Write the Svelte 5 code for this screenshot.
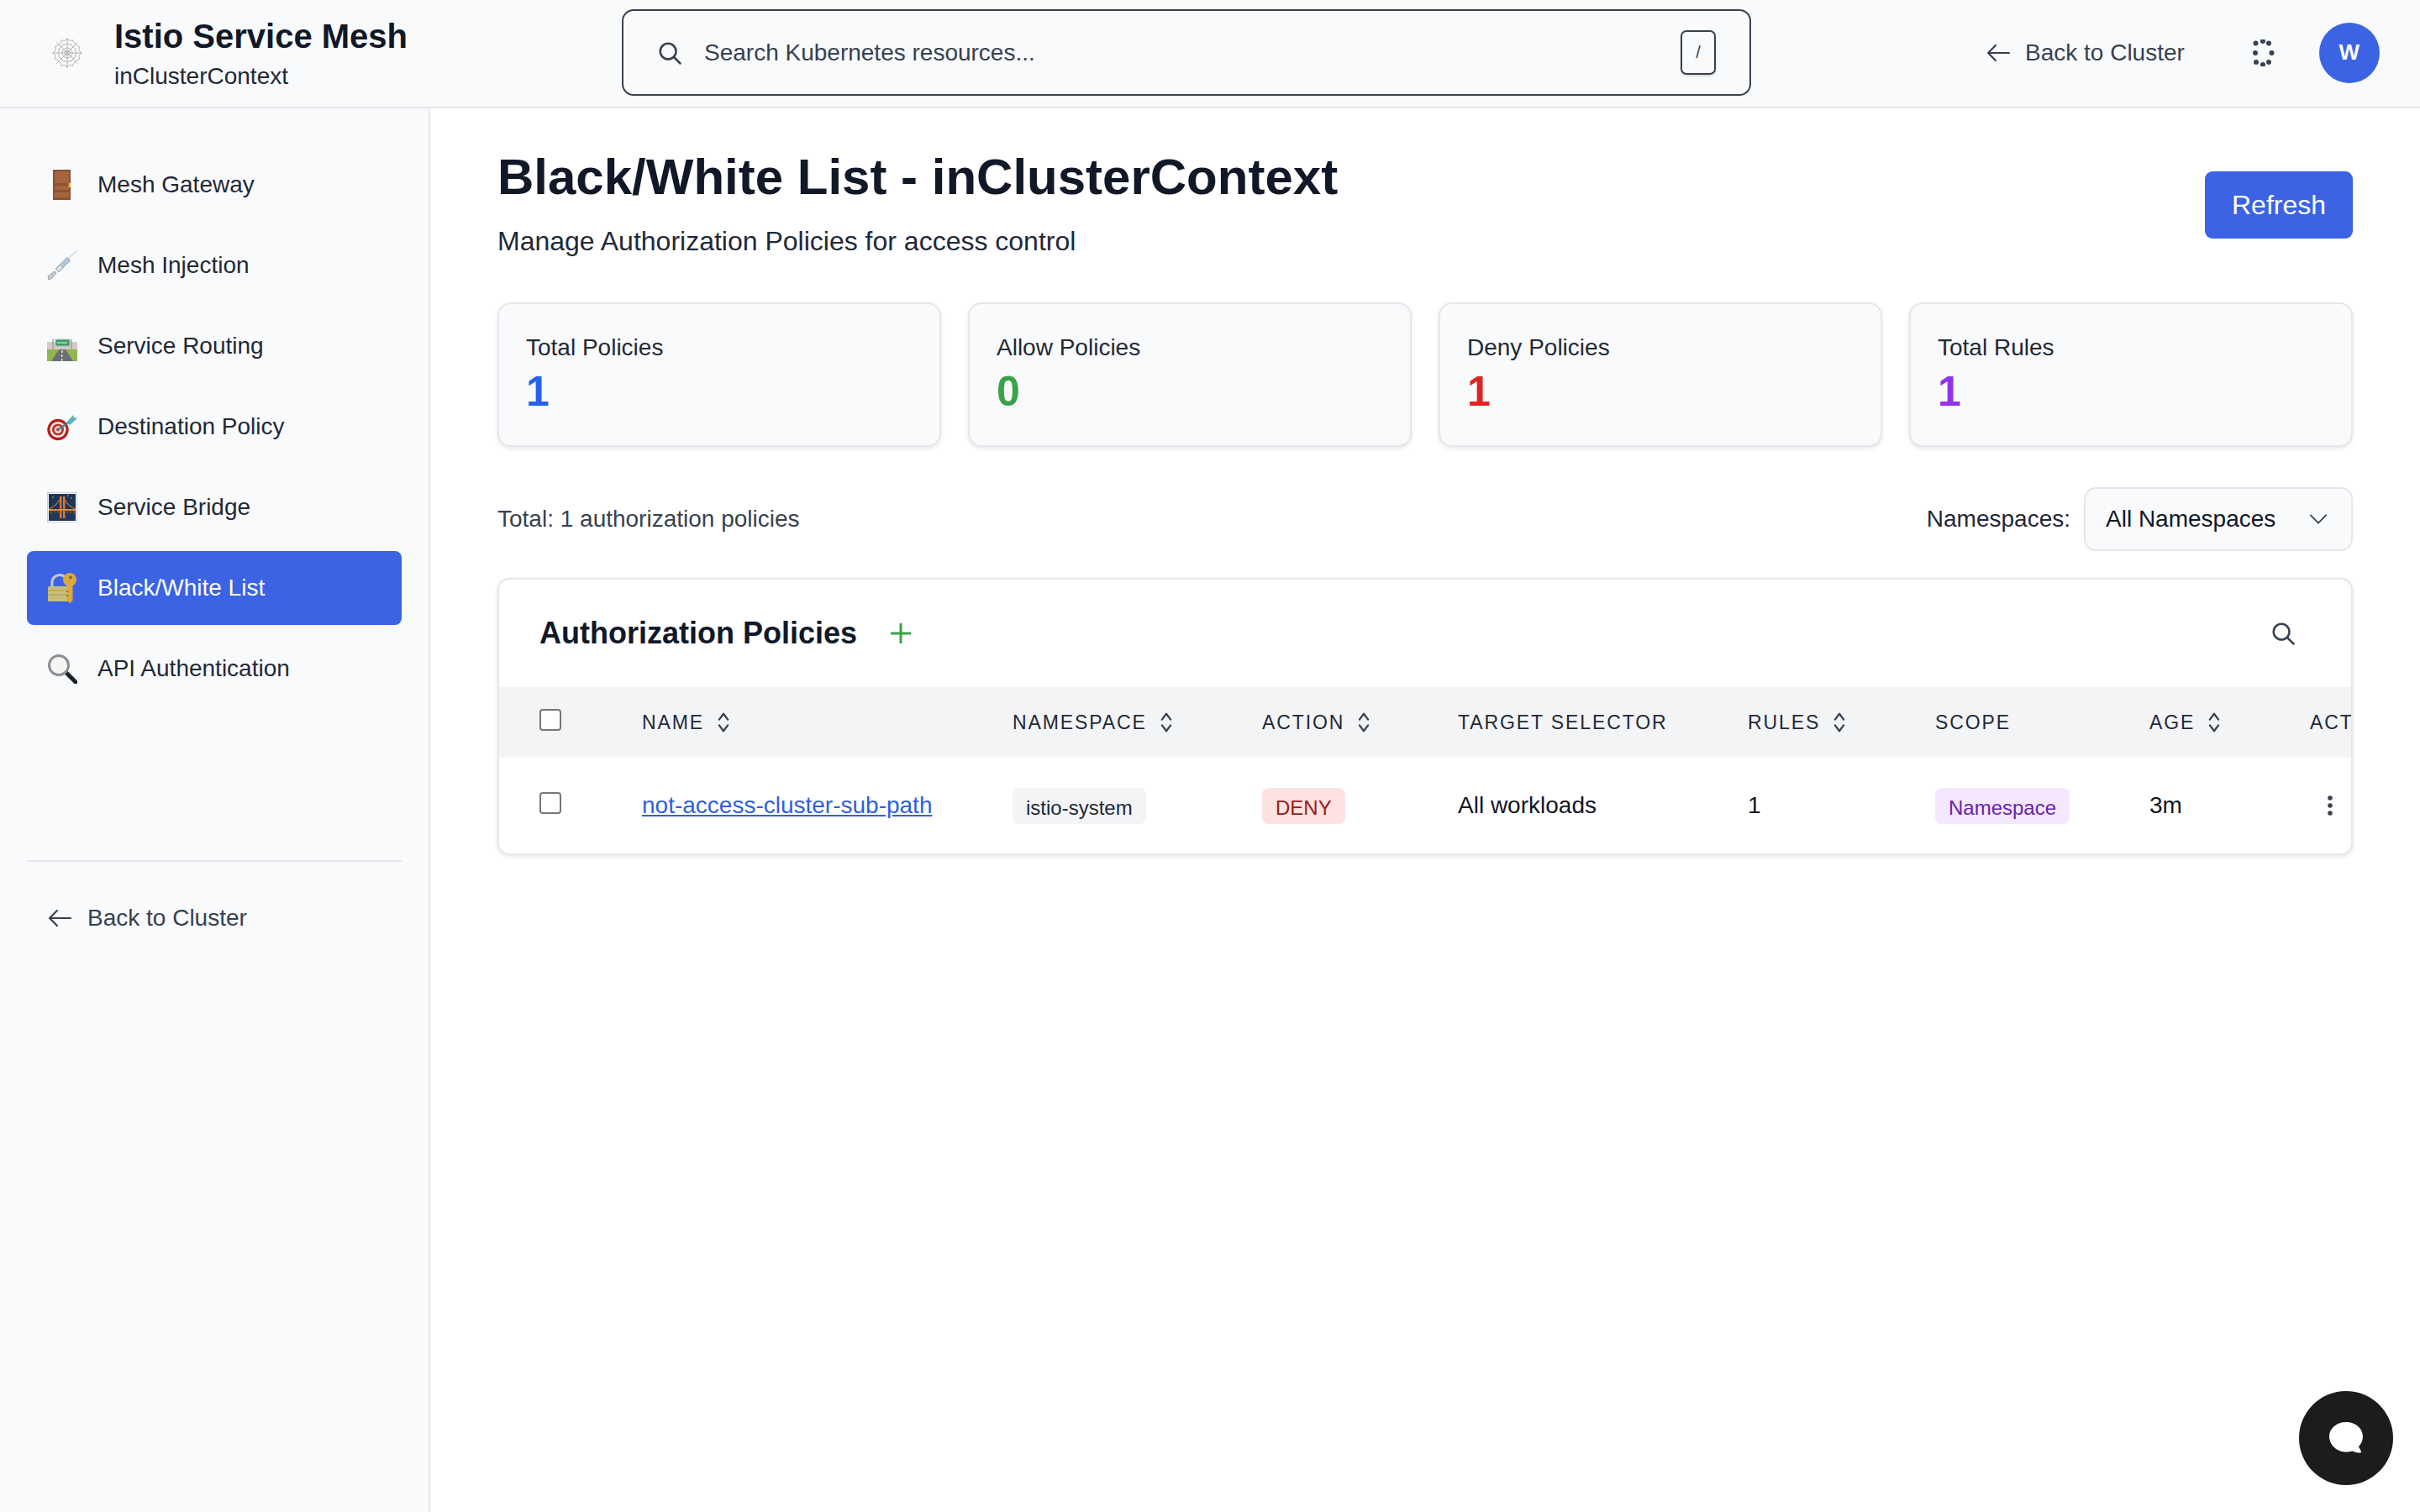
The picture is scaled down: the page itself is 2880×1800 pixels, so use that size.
<script>
	const navItems = [
		{ icon: 'door', label: 'Mesh Gateway' },
		{ icon: 'syringe', label: 'Mesh Injection' },
		{ icon: 'road', label: 'Service Routing' },
		{ icon: 'target', label: 'Destination Policy' },
		{ icon: 'bridge', label: 'Service Bridge' },
		{ icon: 'lock', label: 'Black/White List', active: true },
		{ icon: 'lens', label: 'API Authentication' }
	];

	const stats = [
		{ label: 'Total Policies', value: 1, tone: 'blue' },
		{ label: 'Allow Policies', value: 0, tone: 'green' },
		{ label: 'Deny Policies', value: 1, tone: 'red' },
		{ label: 'Total Rules', value: 1, tone: 'purple' }
	];

	const columns = [
		{ label: 'Name', sort: true },
		{ label: 'Namespace', sort: true },
		{ label: 'Action', sort: true },
		{ label: 'Target Selector' },
		{ label: 'Rules', sort: true },
		{ label: 'Scope' },
		{ label: 'Age', sort: true },
		{ label: 'Actions' }
	];

	const widths = [170, 441, 297, 233, 345, 223, 255, 191, 200];
	const dots = [
		[-8.5, -11.5], [0, -14], [7, -11.5], [-9, 0], [10.5, 0], [-8, 11], [0, 14], [7, 11]
	];
</script>

{#snippet searchIcon()}
	<svg class="ico-search" viewBox="0 0 24 24" fill="none" stroke="currentColor" stroke-width="2" stroke-linecap="round"><circle cx="10.5" cy="10.5" r="7.5" /><path d="m16 16 6 6" /></svg>
{/snippet}

{#snippet arrowLeft()}
	<svg class="ico-arrow" viewBox="0 0 30 24" fill="none" stroke="currentColor" stroke-width="2.2" stroke-linecap="round" stroke-linejoin="round"><path d="M28 12H3M12 3l-9 9 9 9" /></svg>
{/snippet}

{#snippet sortIcon()}
	<svg class="ico-sort" viewBox="0 0 14 24" fill="none" stroke="currentColor" stroke-width="2" stroke-linecap="round" stroke-linejoin="round"><path d="m2.500 9 4.500-6 4.500 6M2.500 15l4.500 6 4.500-6" /></svg>
{/snippet}

{#snippet emoji(name)}
	<svg class="emoji" viewBox="0 0 36 36">
		{#if name === 'door'}
			<rect x="7" y="0" width="21" height="36" fill="#8b5232" />
			<rect x="9" y="2" width="17" height="14" fill="#a5653f" />
			<rect x="9" y="19" width="17" height="5" fill="#a5653f" />
			<rect x="9" y="27" width="17" height="6" fill="#a5653f" />
			<rect x="25.500" y="16" width="2.500" height="5" fill="#e8b93a" />
		{:else if name === 'syringe'}
			<path d="M35 1 25 10" stroke="#b5bcc4" stroke-width="1" />
			<path d="M24 8.500 27.500 12 14 25.500 10.500 22Z" fill="#a9cde6" stroke="#8d98a3" />
			<path d="M19 20.500 15.500 17 10.500 22 14 25.500Z" fill="#e4eaef" stroke="#8d98a3" />
			<path d="M9 25 11 27 6 33 2 35 1 31Z" fill="#c6cbd0" stroke="#999" />
		{:else if name === 'road'}
			<rect x="0" y="13" width="36" height="9" fill="#d8c9c2" />
			<path d="M0 22h36v14H0Z" fill="#8fb84e" />
			<path d="M14 22h8l9 14H5Z" fill="#6d6f73" />
			<path d="M18 23v3M17.800 28v3M17.600 33v3" stroke="#fff" stroke-width="1.200" />
			<path d="M7 10v12M29 10v12" stroke="#9fa3a5" stroke-width="1.500" />
			<rect x="10" y="10" width="17" height="8" fill="#3b9e6a" stroke="#b8c2bc" />
			<path d="M12 14h12" stroke="#cfe8d6" stroke-width="1.200" />
		{:else if name === 'target'}
			<circle cx="13" cy="21.500" r="12.700" fill="#b3201e" />
			<circle cx="13" cy="21.500" r="9.500" fill="#f3ece6" />
			<circle cx="13" cy="21.500" r="7" fill="#c42e28" />
			<circle cx="13" cy="21.500" r="4.200" fill="#f3ece6" />
			<circle cx="13" cy="21.500" r="2" fill="#c42e28" />
			<path d="M13 21.500 27 12" stroke="#4f7f8f" stroke-width="2.200" />
			<path d="M23 13 31 4l1 3 4 1-9 8Z" fill="#58b5bf" />
		{:else if name === 'bridge'}
			<rect x="0.500" y="0.500" width="35" height="35" fill="#fff" stroke="#ccd" />
			<rect x="2" y="2" width="32" height="32" fill="#1d3557" />
			<rect x="2" y="26" width="32" height="8" fill="#20375f" />
			<path d="M2 20Q11 17 17 6M34 20Q25 17 19 6" fill="none" stroke="#d9752e" stroke-width="1.200" />
			<rect x="15" y="5" width="2.500" height="26" fill="#d9752e" />
			<rect x="19" y="5" width="2.500" height="26" fill="#d9752e" />
			<path d="M2 21h32" stroke="#e08a3c" stroke-width="2" />
			<path d="M5 22v4M9 21v4M13 21v4M24 21v4M28 21v4M32 22v4" stroke="#c9682a" stroke-width="1" />
			<circle cx="7" cy="6" r=".8" fill="#e7c66a" /><circle cx="29" cy="7" r=".8" fill="#e7c66a" /><circle cx="25" cy="4" r=".8" fill="#e7c66a" />
		{:else if name === 'lock'}
			<path d="M6 17v-6a9 9 0 0 1 16-5" fill="none" stroke="#c3c6cb" stroke-width="3" />
			<rect x="1" y="16" width="25" height="18" rx="1.500" fill="#c9bd7a" />
			<path d="M1 21h25M1 26h25" stroke="#a99c5c" stroke-width="1" />
			<circle cx="27" cy="8" r="8" fill="#dca93f" />
			<circle cx="28" cy="5.500" r="2" fill="#8a6c24" />
			<path d="M23.500 14h7v19l-3.500 3-3.500-3Z" fill="#dca93f" />
			<path d="M23 22h2.500M23 27h2.500" stroke="#8f6f25" stroke-width="1.500" />
		{:else}
			<path d="M22 22 34 34" stroke="#1e2226" stroke-width="5" stroke-linecap="round" />
			<circle cx="14" cy="14" r="11.500" fill="#f5f6f4" stroke="#8b9095" stroke-width="3" />
		{/if}
	</svg>
{/snippet}

<div class="app">
	<header class="topbar">
		<div class="brand">
			<svg class="web" viewBox="0 0 36 36" fill="none" stroke="#b4b4b4" stroke-width="1">
				<path d="M18 0v36M0 18h36M5.300 5.300l25.400 25.400M30.700 5.300 5.300 30.700" />
				<path d="M18 1Q21 5 24.500 2.500 25.500 8 33 11 30 14.500 35 18 30 21.500 33 25 25.500 28 24.500 33.500 21 31 18 35 15 31 11.500 33.500 10.500 28 3 25 6 21.500 1 18 6 14.500 3 11 10.500 8 11.500 2.500 15 5 18 1Z" />
				<path d="M18 7Q21 9 23 8 24 12 28 13 27 16 29 18 27 20 28 23 24 24 23 28 21 27 18 29 15 27 13 28 12 24 8 23 9 20 7 18 9 16 8 13 12 12 13 8 15 9 18 7Z" />
				<circle cx="18" cy="18" r="6" />
				<circle cx="18" cy="18" r="3" />
			</svg>
			<div class="brand-text">
				<div class="brand-title">Istio Service Mesh</div>
				<div class="brand-sub">inClusterContext</div>
			</div>
		</div>
		<div class="search">
			{@render searchIcon()}
			<span class="search-text">Search Kubernetes resources...</span>
			<kbd>/</kbd>
		</div>
		<div class="top-actions">
			<span class="top-back">{@render arrowLeft()}Back to Cluster</span>
			<svg class="spinner" viewBox="-16 -16 32 32" fill="#374151">
				{#each dots as [x, y]}
					<circle cx={x} cy={y} r="3" />
				{/each}
			</svg>
			<div class="avatar">W</div>
		</div>
	</header>

	<div class="body">
		<aside class="sidebar">
			<nav class="nav">
				{#each navItems as item}
					<div class="nav-item" class:active={item.active}>
						{@render emoji(item.icon)}
						<span>{item.label}</span>
					</div>
				{/each}
			</nav>
			<div class="side-foot">
				<span class="side-back">{@render arrowLeft()}Back to Cluster</span>
			</div>
		</aside>

		<main class="main">
			<div class="page-head">
				<div>
					<h1>Black/White List - inClusterContext</h1>
					<p>Manage Authorization Policies for access control</p>
				</div>
				<button class="refresh">Refresh</button>
			</div>

			<div class="stats">
				{#each stats as stat}
					<div class="stat">
						<div class="stat-label">{stat.label}</div>
						<div class="stat-value {stat.tone}">{stat.value}</div>
					</div>
				{/each}
			</div>

			<div class="filter-row">
				<span class="total">Total: 1 authorization policies</span>
				<div class="filter">
					<span>Namespaces:</span>
					<div class="select">
						<span>All Namespaces</span>
						<svg viewBox="0 0 24 24" fill="none" stroke="#374151" stroke-width="2" stroke-linecap="round" stroke-linejoin="round"><path d="m2 7 10 10 10-10" /></svg>
					</div>
				</div>
			</div>

			<section class="table-card">
				<div class="table-head">
					<div class="table-title">
						<h2>Authorization Policies</h2>
						<svg class="plus" viewBox="0 0 24 24" fill="none" stroke="#3ba24a" stroke-width="3" stroke-linecap="round"><path d="M12 1v22M1 12h22" /></svg>
					</div>
					{@render searchIcon()}
				</div>
				<table>
					<colgroup>
						{#each widths as w}
							<col style="width: {w}px" />
						{/each}
					</colgroup>
					<thead>
						<tr>
							<th class="check"><span class="box"></span></th>
							{#each columns as col}
								<th>
									<span class="th-inner">{col.label}{#if col.sort}{@render sortIcon()}{/if}</span>
								</th>
							{/each}
						</tr>
					</thead>
					<tbody>
						<tr>
							<td class="check"><span class="box"></span></td>
							<td><a href="#policy">not-access-cluster-sub-path</a></td>
							<td><span class="chip gray">istio-system</span></td>
							<td><span class="chip deny">DENY</span></td>
							<td>All workloads</td>
							<td>1</td>
							<td><span class="chip scope">Namespace</span></td>
							<td>3m</td>
							<td>
								<svg class="kebab" viewBox="0 0 8 26" fill="#374151"><circle cx="4" cy="4" r="2.800" /><circle cx="4" cy="13" r="2.800" /><circle cx="4" cy="22" r="2.800" /></svg>
							</td>
						</tr>
					</tbody>
				</table>
			</section>
		</main>
	</div>

	<button class="chat" aria-label="Chat">
		<svg viewBox="0 0 40 38" fill="#fff"><path d="M20 0c11 0 20 7.500 20 17 0 5-2 9-5 12l3 6c.5 1-.5 1.500-1.500 1.500-3 0-6-.5-8.500-2-2.500.5-5 1-8 1C9 35.500 0 27 0 17 0 7.500 9 0 20 0Z" /></svg>
	</button>
</div>

<style>
	:global(body) {
		background: #fff;
		font-family: 'Liberation Sans', Arial, sans-serif;
		color: #111827;
	}
	.app {
		width: 2880px;
		height: 1800px;
		overflow: hidden;
		position: relative;
		display: flex;
		flex-direction: column;
	}
	.topbar {
		height: 129px;
		box-sizing: border-box;
		flex: none;
		background: #f9fafb;
		border-bottom: 2px solid #e5e7eb;
		display: flex;
		align-items: flex-start;
	}
	.brand {
		width: 740px;
		flex: none;
		display: flex;
		align-items: center;
		gap: 38px;
		padding: 11px 0 0 62px;
		box-sizing: border-box;
	}
	.web {
		width: 36px;
		height: 36px;
		margin-top: 4px;
	}
	.brand-title {
		font-size: 40px;
		font-weight: 700;
		line-height: 64px;
		height: 60px;
		color: #111827;
	}
	.brand-sub {
		font-size: 28px;
		line-height: 40px;
		color: #1f2937;
	}
	.search {
		width: 1344px;
		height: 103px;
		margin-top: 11px;
		flex: none;
		box-sizing: border-box;
		border: 2px solid #374151;
		border-radius: 14px;
		display: flex;
		align-items: center;
		padding: 0 40px 0 40px;
		color: #374151;
		font-size: 28px;
	}
	.ico-search {
		width: 30px;
		height: 30px;
		flex: none;
		color: #374151;
	}
	.search-text {
		flex: 1;
		margin-left: 26px;
	}
	kbd {
		width: 42px;
		height: 53px;
		box-sizing: border-box;
		border: 2px solid #374151;
		border-radius: 7px;
		display: flex;
		align-items: center;
		justify-content: center;
		font-family: inherit;
		font-size: 20px;
		box-shadow: 0 2px 3px rgba(0, 0, 0, 0.12);
	}
	.top-actions {
		flex: 1;
		display: flex;
		align-items: center;
		height: 125px;
		color: #374151;
		font-size: 28px;
		padding-left: 279px;
	}
	.top-back,
	.side-back {
		display: flex;
		align-items: center;
		gap: 17px;
	}
	.side-back {
		gap: 18px;
	}
	.ico-arrow {
		width: 30px;
		height: 24px;
		flex: none;
	}
	.spinner {
		width: 32px;
		height: 32px;
		margin-left: 77px;
	}
	.avatar {
		width: 72px;
		height: 72px;
		margin-left: 51px;
		border-radius: 50%;
		background: #3b63e4;
		color: #fff;
		font-weight: 700;
		font-size: 26px;
		display: flex;
		align-items: center;
		justify-content: center;
	}
	.body {
		flex: 1;
		display: flex;
		min-height: 0;
	}
	.sidebar {
		width: 512px;
		flex: none;
		box-sizing: border-box;
		background: #f9fafb;
		border-right: 2px solid #e5e7eb;
		padding: 47px 32px 0;
	}
	.nav {
		display: flex;
		flex-direction: column;
		gap: 8px;
	}
	.nav-item {
		height: 88px;
		display: flex;
		align-items: center;
		gap: 24px;
		padding-left: 24px;
		border-radius: 8px;
		font-size: 28px;
		color: #1f2937;
	}
	.nav-item.active {
		background: #3b63e4;
		color: #fff;
	}
	.emoji {
		width: 36px;
		height: 36px;
		flex: none;
	}
	.side-foot {
		margin-top: 184px;
		border-top: 2px solid #e5e7eb;
		padding: 51px 0 0 24px;
		font-size: 28px;
		color: #374151;
	}
	.main {
		flex: 1;
		min-width: 0;
		padding: 48px 80px 0;
	}
	.page-head {
		display: flex;
		justify-content: space-between;
		align-items: flex-start;
		height: 183px;
	}
	h1 {
		margin: 0;
		font-size: 60px;
		line-height: 68px;
		font-weight: 700;
		color: #111827;
	}
	.page-head p {
		margin: 20px 0 0;
		font-size: 32px;
		line-height: 44px;
		color: #1f2937;
	}
	.refresh {
		width: 176px;
		height: 80px;
		border: 0;
		border-radius: 9px;
		background: #3b63e4;
		color: #fff;
		font-family: inherit;
		font-size: 32px;
		margin-top: 27px;
	}
	.stats {
		display: grid;
		grid-template-columns: repeat(4, 1fr);
		gap: 32px;
	}
	.stat {
		height: 172px;
		box-sizing: border-box;
		background: #f9fafb;
		border: 2px solid #e5e7eb;
		border-radius: 16px;
		box-shadow: 0 2px 5px rgba(0, 0, 0, 0.1);
		padding: 32px 32px 0;
	}
	.stat-label {
		font-size: 28px;
		line-height: 40px;
		color: #1f2937;
	}
	.stat-value {
		font-size: 50px;
		line-height: 56px;
		font-weight: 700;
		margin-top: 4px;
	}
	.blue { color: #2563eb; }
	.green { color: #3ba24a; }
	.red { color: #dc2626; }
	.purple { color: #9333ea; }
	.filter-row {
		display: flex;
		justify-content: space-between;
		align-items: center;
		margin-top: 48px;
		height: 76px;
		font-size: 28px;
	}
	.total {
		color: #374151;
	}
	.filter {
		display: flex;
		align-items: center;
		gap: 16px;
		color: #1f2937;
	}
	.select {
		width: 320px;
		height: 76px;
		box-sizing: border-box;
		background: #f9fafb;
		border: 2px solid #e5e7eb;
		border-radius: 14px;
		display: flex;
		align-items: center;
		justify-content: space-between;
		padding: 0 28px 0 24px;
		color: #111827;
	}
	.select svg {
		width: 22px;
		height: 22px;
	}
	.table-card {
		margin-top: 32px;
		height: 330px;
		box-sizing: border-box;
		border: 2px solid #e5e7eb;
		border-radius: 14px;
		box-shadow: 0 2px 5px rgba(0, 0, 0, 0.1);
		overflow: hidden;
		background: #fff;
	}
	.table-head {
		height: 128px;
		display: flex;
		align-items: center;
		justify-content: space-between;
		padding: 0 66px 0 48px;
		color: #374151;
	}
	.table-title {
		display: flex;
		align-items: center;
		gap: 40px;
	}
	h2 {
		margin: 0;
		font-size: 36px;
		font-weight: 700;
		color: #111827;
	}
	.plus {
		width: 24px;
		height: 24px;
	}
	table {
		table-layout: fixed;
		width: 2155px;
		border-collapse: collapse;
		font-size: 28px;
		color: #111827;
	}
	thead tr {
		background: #f3f4f6;
		height: 84px;
	}
	tbody tr {
		height: 114px;
	}
	th {
		padding: 0;
		text-align: left;
		font-weight: 400;
		font-size: 23px;
		letter-spacing: 1.9px;
		text-transform: uppercase;
		color: #1f2937;
		white-space: nowrap;
		overflow: hidden;
	}
	td {
		padding: 0;
		white-space: nowrap;
	}
	.th-inner {
		display: inline-flex;
		align-items: center;
		gap: 15px;
	}
	.ico-sort {
		width: 16px;
		height: 28px;
		color: #374151;
	}
	.check {
		padding-left: 48px;
	}
	.box {
		display: block;
		width: 26px;
		height: 26px;
		box-sizing: border-box;
		border: 2px solid #767676;
		border-radius: 4px;
		background: #fff;
		margin-bottom: 7px;
	}
	a {
		color: #2f5fe0;
		text-decoration: underline;
	}
	.chip {
		display: inline-block;
		height: 43px;
		line-height: 47px;
		border-radius: 8px;
		padding: 0 16px;
		font-size: 24px;
		vertical-align: middle;
	}
	.gray { background: #f3f4f6; color: #1f2937; }
	.deny { background: #fee2e2; color: #991b1b; }
	.scope { background: #f3e8ff; color: #6b21a8; }
	.kebab {
		display: block;
		width: 8px;
		height: 26px;
		margin: 0 0 0 20px;
	}
	.chat {
		position: absolute;
		left: 2736px;
		top: 1656px;
		width: 112px;
		height: 112px;
		border: 0;
		border-radius: 50%;
		background: #1c1c1c;
		display: flex;
		align-items: center;
		justify-content: center;
		padding: 0;
	}
	.chat svg {
		width: 40px;
		height: 38px;
	}
</style>
